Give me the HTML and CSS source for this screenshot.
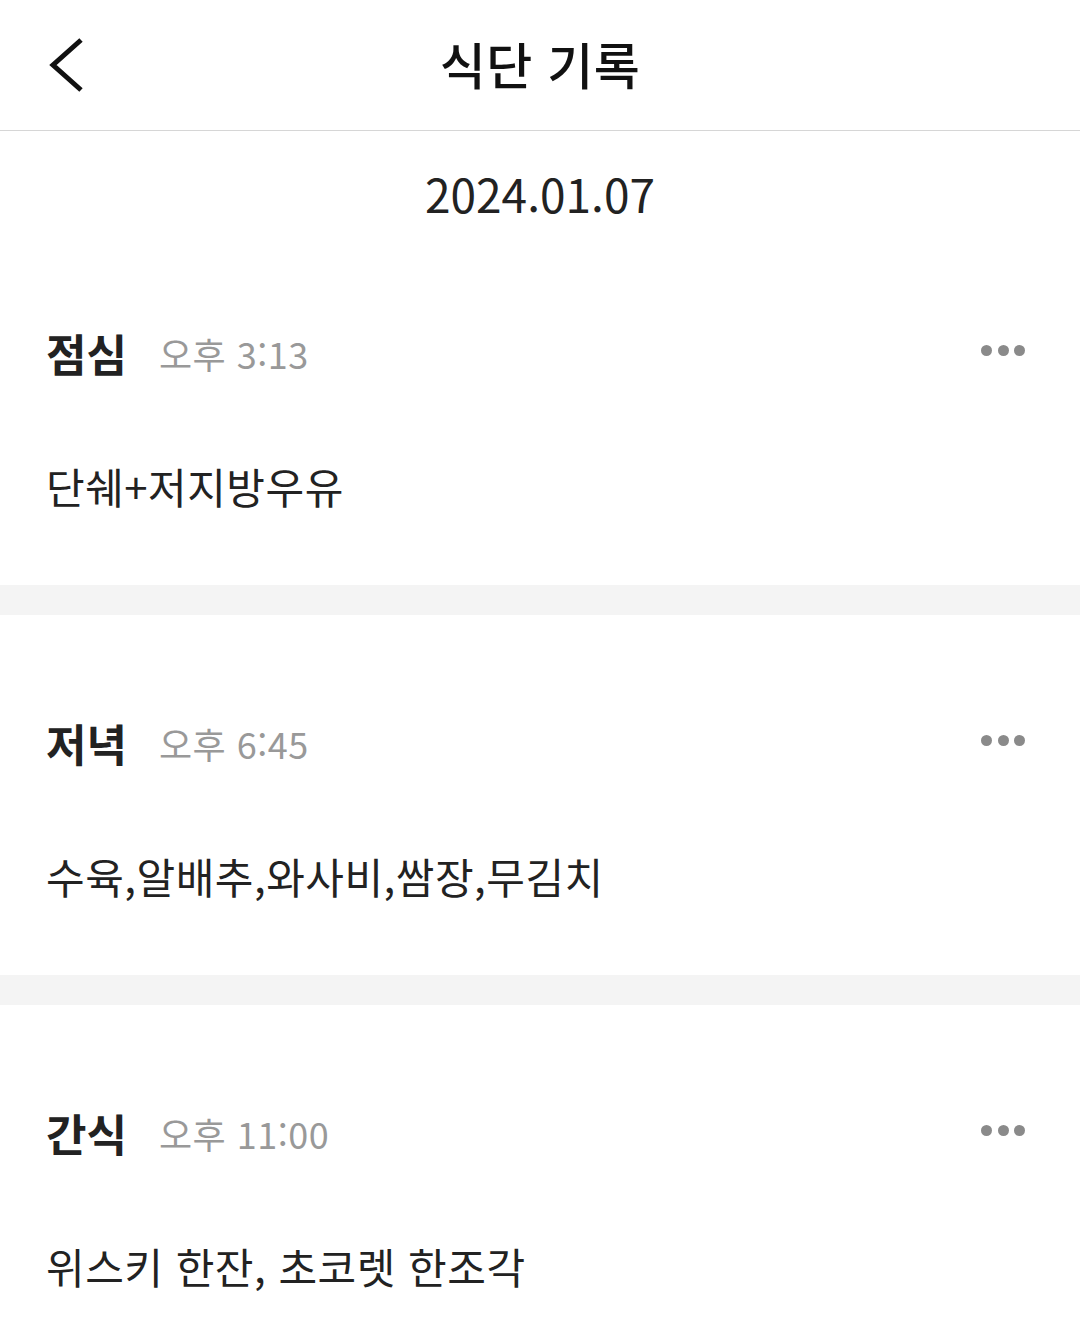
FILE: index.html
```html
<!DOCTYPE html>
<html lang="ko">
<head>
    <meta charset="UTF-8">
    <meta name="viewport" content="width=device-width, initial-scale=1.0">
    <title>식단 기록</title>
    <link rel="stylesheet" href="styles.css">
</head>
<body>
<div class="header">
    <button class="back-btn" aria-label="뒤로">
        <svg width="48" height="60" viewBox="0 0 48 60">
            <polyline points="37,5 9,30 37,55" fill="none" stroke="#111" stroke-width="5"/>
        </svg>
    </button>
    <h1>식단 기록</h1>
    <div></div>
</div>

<div class="date">2024.01.07</div>

<div class="meal">
    <div class="meal-head">
        <span class="meal-name">점심</span>
        <span class="meal-time">오후 3:13</span>
        <button class="more-btn" aria-label="더보기"><i></i><i></i><i></i></button>
    </div>
    <div class="meal-body">단쉐+저지방우유</div>
</div>
<div class="divider"></div>

<div class="meal">
    <div class="meal-head">
        <span class="meal-name">저녁</span>
        <span class="meal-time">오후 6:45</span>
        <button class="more-btn" aria-label="더보기"><i></i><i></i><i></i></button>
    </div>
    <div class="meal-body">수육,알배추,와사비,쌈장,무김치</div>
</div>
<div class="divider"></div>

<div class="meal">
    <div class="meal-head">
        <span class="meal-name">간식</span>
        <span class="meal-time">오후 11:00</span>
        <button class="more-btn" aria-label="더보기"><i></i><i></i><i></i></button>
    </div>
    <div class="meal-body">위스키 한잔, 초코렛 한조각</div>
</div>
</body>
</html>
```

FILE: styles.css
```css
* {
    margin: 0;
    padding: 0;
    box-sizing: border-box;
}
body {
    font-family: "Noto Sans CJK KR", "Noto Sans", sans-serif;
    background: #ffffff;
    color: #222;
    width: 1080px;
}
button {
    background: none;
    border: none;
    cursor: pointer;
}
.header {
    height: 131px;
    border-bottom: 1px solid #d6d6d6;
    display: grid;
    grid-template-columns: 1fr auto 1fr;
    align-items: center;
    padding: 0 44px;
}
.back-btn {
    width: 48px;
    height: 60px;
    display: flex;
}
.header h1 {
    font-size: 50px;
    font-weight: 500;
    letter-spacing: 0.5px;
    color: #111;
    line-height: 1;
    margin-top: -4px;
}
.date {
    text-align: center;
    font-size: 46px;
    line-height: 55px;
    padding-top: 35px;
    color: #222;
    height: 94px;
}
.meal {
    padding: 98px 55px 69px 46px;
}
.meal-head {
    display: flex;
    align-items: center;
    height: 60px;
}
.meal-name {
    font-size: 44px;
    font-weight: 700;
    color: #222;
}
.meal-time {
    font-size: 36px;
    letter-spacing: 0.5px;
    color: #999;
    margin-left: 32px;
}
.more-btn {
    margin-left: auto;
    display: flex;
    gap: 5.5px;
    margin-top: -6px;
}
.more-btn i {
    width: 11px;
    height: 11px;
    border-radius: 50%;
    background: #8a8a8a;
}
.meal-body {
    margin-top: 73px;
    font-size: 42px;
    letter-spacing: 0.5px;
    line-height: 60px;
    color: #222;
}
.divider {
    height: 30px;
    background: #f4f4f4;
}
```
